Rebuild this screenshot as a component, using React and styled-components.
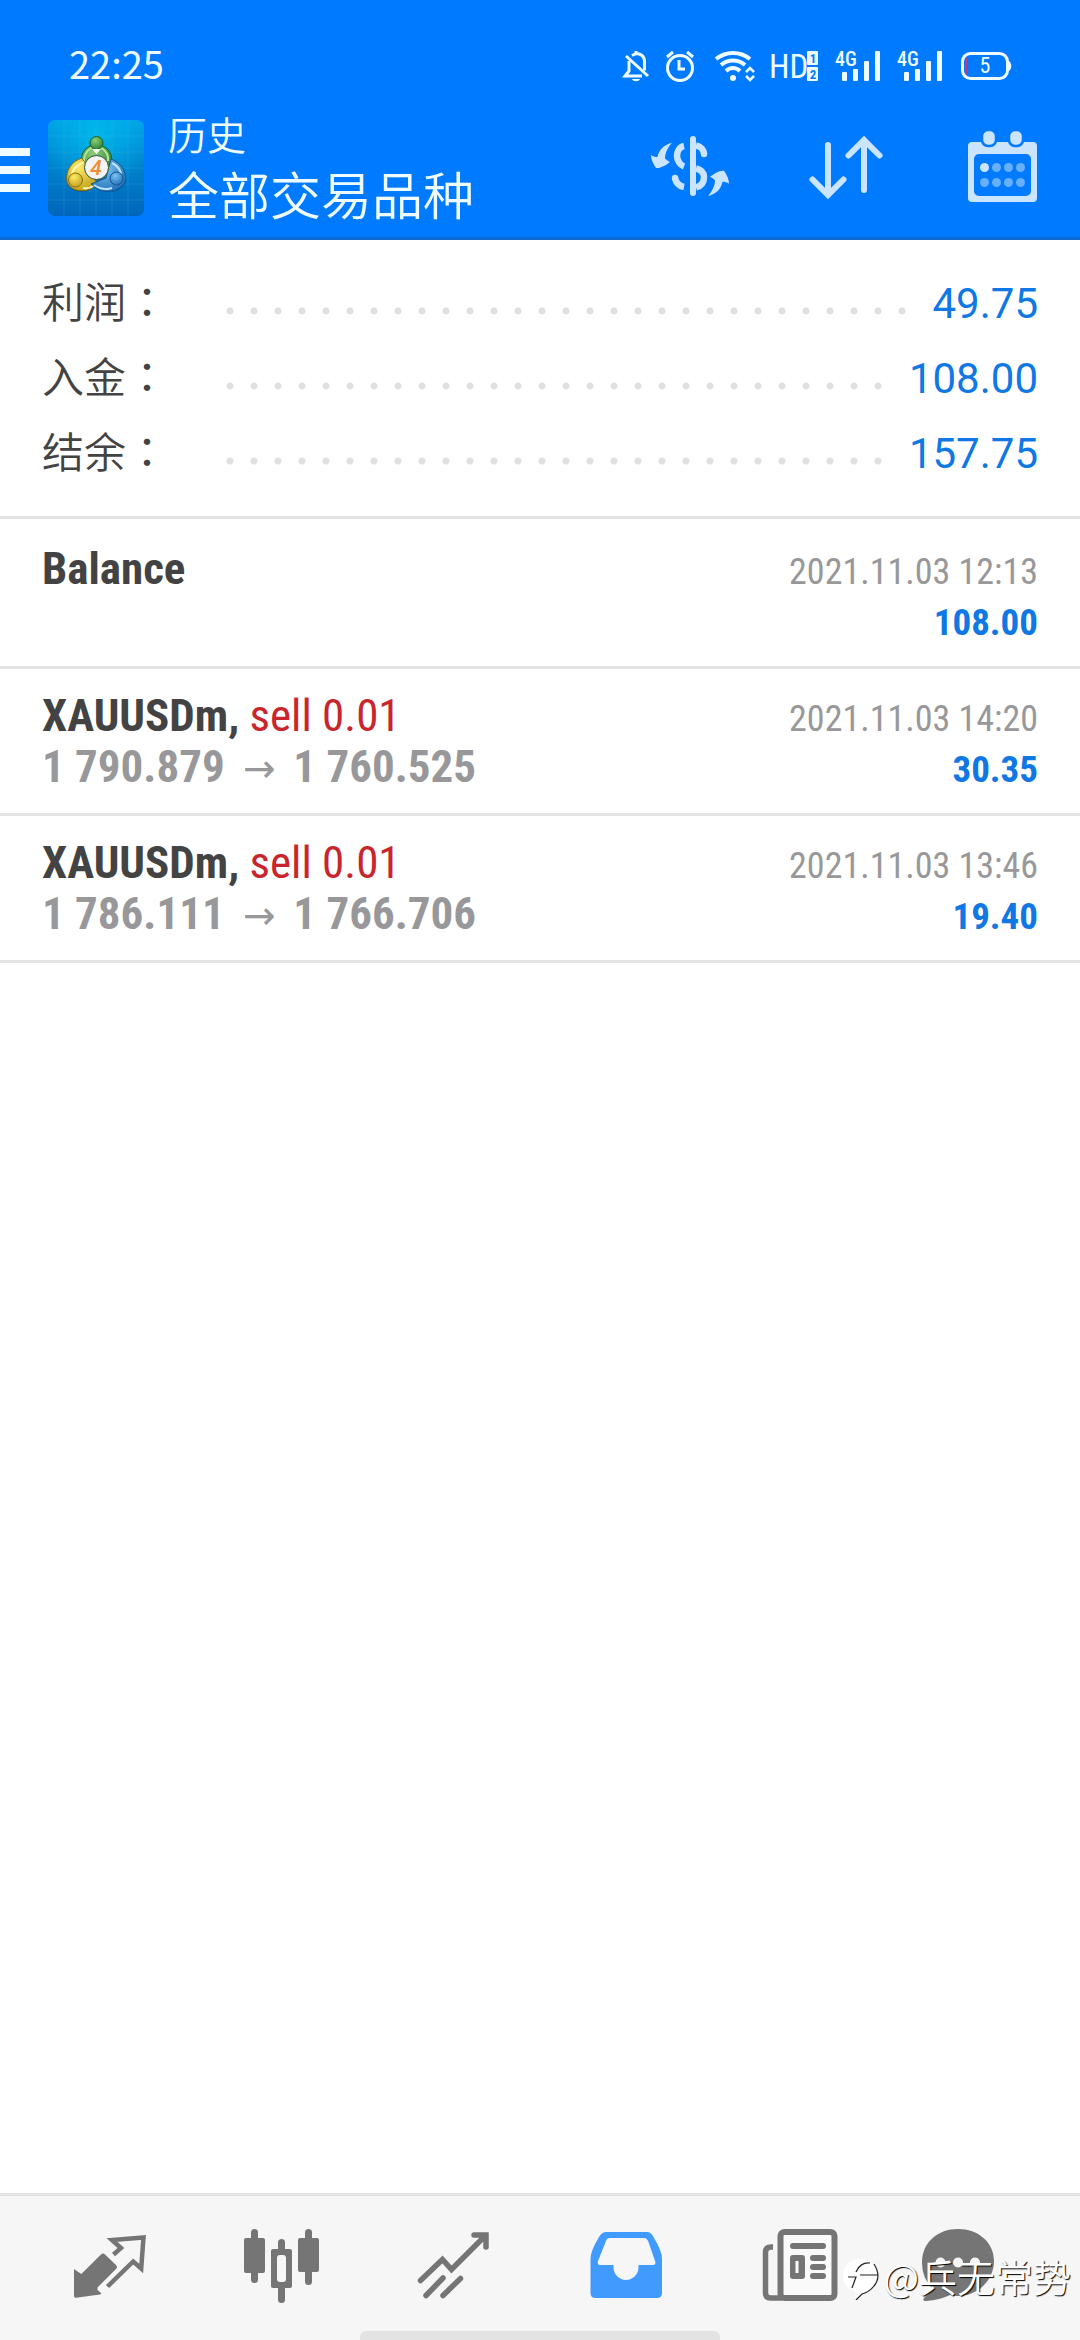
import React from 'react';
import styled, {createGlobalStyle, ThemeProvider} from 'styled-components';

const theme = {
  color: {
    primary: '#007aff',
    primaryDark: '#0a6bd2',
    active: '#419bff',
    icon: '#cce5ff',
    navIcon: '#757575',
    line: '#e3e3e3',
    text: '#434343',
    muted: '#98989a',
    value: '#0f78e4',
    sell: '#c8262c',
  },
  font: {
    cjk: '"Noto Sans CJK SC", sans-serif',
    regular: 'Roboto, "Noto Sans CJK SC", sans-serif',
    condensed: '"Roboto Condensed", "Liberation Sans Narrow", Roboto, sans-serif',
  },
};

const GlobalStyle = createGlobalStyle`
  *, *::before, *::after {
    box-sizing: border-box;
  }

  body {
    margin: 0;
    background: #fff;
  }

  h1, h2, p, ul, dl, dd {
    margin: 0;
    padding: 0;
  }
`;

const Screen = styled.div`
  position: relative;
  display: flex;
  flex-direction: column;
  min-height: 100vh;
  font-family: ${({theme}) => theme.font.regular};
  color: ${({theme}) => theme.color.text};
`;

const Header = styled.header`
  background: ${({theme}) => theme.color.primary};
  border-bottom: 3px solid ${({theme}) => theme.color.primaryDark};
  color: #effcff;
`;

const StatusBar = styled.div`
  display: flex;
  justify-content: space-between;
  align-items: flex-start;
  padding: 48px 69px 0;
`;

const Time = styled.time`
  font: 400 38px/30px ${({theme}) => theme.font.cjk};
`;

const StatusIcons = styled.div`
  display: flex;
  gap: 16px;

  svg {
    display: block;
    height: 36px;
    overflow: visible;
  }

  text {
    font-family: ${({theme}) => theme.font.condensed};
  }
`;

const TitleBar = styled.div`
  display: flex;
  align-items: center;
  padding: 24px 30px 9px 0;
`;

const IconButton = styled.button`
  flex: none;
  padding: 0;
  border: 0;
  background: none;
  color: ${({theme}) => theme.color.icon};

  svg {
    display: block;
  }
`;

const MenuButton = styled(IconButton)`
  margin-right: 18px;
  color: #effcff;
`;

const Titles = styled.div`
  flex: 1;
  margin-left: 24px;
  font-family: ${({theme}) => theme.font.cjk};
`;

const Title = styled.h1`
  font-size: 39px;
  font-weight: 350;
  line-height: 51px;
`;

const Subtitle = styled.p`
  font-size: 51px;
  font-weight: 350;
  line-height: 69px;
`;

const Actions = styled.div`
  display: flex;
  gap: 60px;
`;

const Main = styled.main`
  flex: 1;
`;

const Summary = styled.dl`
  padding: 26px 42px 25px;
  border-bottom: 3px solid ${({theme}) => theme.color.line};
`;

const SummaryRow = styled.div`
  display: flex;
  align-items: baseline;
`;

const Label = styled.dt`
  flex: 0 0 176px;
  font: 350 42px/60px ${({theme}) => theme.font.cjk};
`;

const Colon = styled.span`
  font-family: "Noto Sans CJK TC", sans-serif;
  font-weight: 400;
`;

const Leader = styled.span`
  flex: 1;
  height: 14px;
  margin-right: 14px;
  background: radial-gradient(circle, #e0e0e0 3px, transparent 4px) 0 0 / 24px 14px repeat-x;
`;

const Value = styled.dd`
  font-size: 42px;
  line-height: 75px;
  color: ${({theme}) => theme.color.value};
`;

const Deals = styled.ul`
  padding-top: 3px;
  list-style: none;
  font-family: ${({theme}) => theme.font.condensed};
`;

const Deal = styled.li`
  padding: 21px 42px;
  border-bottom: 3px solid ${({theme}) => theme.color.line};
`;

const Line = styled.div`
  display: flex;
  justify-content: space-between;
  align-items: baseline;
`;

const Name = styled.h2`
  font-size: 45px;
  font-weight: 700;
  line-height: 51px;
`;

const Side = styled.span`
  font-weight: 400;
  color: ${({theme}) => theme.color.sell};
`;

const Prices = styled.p`
  display: flex;
  align-items: baseline;
  gap: 18px;
  font-size: 45px;
  font-weight: 700;
  line-height: 51px;
  color: ${({theme}) => theme.color.muted};

  /* keeps the line and its baseline when there are no prices */
  &:empty::before {
    content: '\\200b';
  }
`;

const Arrow = styled.span`
  font: 400 39px/30px "DejaVu Sans", sans-serif;
`;

const DateTime = styled.time`
  font-size: 36px;
  line-height: 39px;
  color: ${({theme}) => theme.color.muted};
`;

const Amount = styled.strong`
  font-size: 37px;
  line-height: 39px;
  color: ${({theme}) => theme.color.value};
`;

const Nav = styled.nav`
  position: relative;
  display: grid;
  grid-template-columns: repeat(6, 1fr);
  padding: 24px;
  border-top: 3px solid ${({theme}) => theme.color.line};
  background: #f6f6f6;
`;

const NavLink = styled.a`
  display: flex;
  justify-content: center;
  color: ${({theme, $active}) => ($active ? theme.color.active : theme.color.navIcon)};
`;

const HomeIndicator = styled.span`
  position: absolute;
  bottom: 0;
  left: 50%;
  width: calc(100% / 3);
  height: 9px;
  margin-left: calc(-100% / 6);
  border-radius: 6px 6px 0 0;
  background: #e3e3e3;
`;

const Watermark = styled.div`
  position: absolute;
  right: 9px;
  bottom: 40px;
  display: flex;
  align-items: flex-end;
  gap: 4px;
  font: 350 38px/48px ${({theme}) => theme.font.cjk};
  color: #fff;
  text-shadow: 1px 1px 1px #000;
  pointer-events: none;
`;

const BellOffIcon = () => (
  <svg width="26" viewBox="0 0 26 36" fill="none" stroke="currentColor" strokeWidth="3">
    <path d="M6 13v10l-4 5h17M9 7.500c7-4 13 0 12.500 7v8"/>
    <path d="M3 8l22 20M13 3v3"/>
    <path d="M9 31h8c-1 3-7 3-8 0z" fill="currentColor" stroke="none"/>
  </svg>
);

const AlarmIcon = () => (
  <svg width="32" viewBox="0 0 32 36" fill="none" stroke="currentColor" strokeWidth="3">
    <circle cx="15" cy="20" r="12.500"/>
    <path d="M14 12v9h6M2 9l6-5M28 9l-6-5"/>
  </svg>
);

const WifiIcon = () => (
  <svg width="42" viewBox="0 0 42 36" fill="none" stroke="currentColor" strokeWidth="4">
    <path d="M3 11c10-8 24-8 34 0M8 17c7-6 17-6 24 0M13 23c4-4 10-4 14 0"/>
    <circle cx="20" cy="30" r="3" fill="currentColor" stroke="none"/>
    <path d="M33 24l4-4 4 4M33 28l4 4 4-4" strokeWidth="2.500"/>
  </svg>
);

const HdIcon = () => (
  <svg width="48" viewBox="0 0 48 36" fill="currentColor">
    <text x="-2" y="30" fontSize="33">HD</text>
    <rect x="36" y="3" width="11" height="14" rx="1"/>
    <rect x="36" y="19" width="11" height="14" rx="1"/>
    <text x="42" y="15" fontSize="13" fontWeight="700" textAnchor="middle" fill="#007aff">1</text>
    <text x="42" y="31" fontSize="13" fontWeight="700" textAnchor="middle" fill="#007aff">2</text>
  </svg>
);

const SignalIcon = () => (
  <svg width="46" viewBox="0 0 46 36" fill="currentColor">
    <text x="0" y="18" fontSize="20" fontWeight="500">4G</text>
    <rect x="7" y="24" width="5" height="9" rx="1"/>
    <rect x="18" y="21" width="5" height="12" rx="1"/>
    <rect x="29" y="13" width="5" height="20" rx="1"/>
    <rect x="40" y="3" width="5" height="30" rx="1"/>
  </svg>
);

const BatteryIcon = () => (
  <svg width="52" viewBox="0 0 52 36" fill="none">
    <rect x="3.500" y="5.500" width="45" height="25" rx="8" stroke="currentColor" strokeWidth="3"/>
    <path d="M50 13c3 2 3 8 0 10z" fill="currentColor"/>
    <path d="M8 9v18c-3-3-3-15 0-18z" fill="#c0397a"/>
    <text x="26" y="25" fontSize="22" textAnchor="middle" fill="currentColor">5</text>
  </svg>
);

const MenuIcon = () => (
  <svg width="30" height="48" viewBox="0 0 30 48" fill="currentColor">
    <path d="M0 4h30v8H0zM0 22h30v8H0zM0 40h30v8H0z"/>
  </svg>
);

const Logo = () => (
  <svg width="96" height="96" viewBox="0 0 96 96" role="img" aria-label="MetaTrader 4">
    <defs>
      <linearGradient id="tile" x1="0" y1="0" x2="0" y2="1">
        <stop offset="0" stopColor="#009fe6"/>
        <stop offset="0.500" stopColor="#0080cb"/>
        <stop offset="1" stopColor="#0066bb"/>
      </linearGradient>
      <radialGradient id="shine" cx="0.500" cy="0.150" r="0.600">
        <stop offset="0" stopColor="#00c4ee" stopOpacity="0.700"/>
        <stop offset="1" stopColor="#00c4ee" stopOpacity="0"/>
      </radialGradient>
      <radialGradient id="green" cx="0.400" cy="0.300" r="0.800">
        <stop offset="0" stopColor="#8fce78"/>
        <stop offset="1" stopColor="#1f7d2c"/>
      </radialGradient>
      <radialGradient id="yellow" cx="0.400" cy="0.300" r="0.800">
        <stop offset="0" stopColor="#fdea6a"/>
        <stop offset="1" stopColor="#bd9a12"/>
      </radialGradient>
      <radialGradient id="blue" cx="0.400" cy="0.300" r="0.800">
        <stop offset="0" stopColor="#7cc4f0"/>
        <stop offset="1" stopColor="#1769b5"/>
      </radialGradient>
    </defs>
    <rect width="96" height="96" rx="7" fill="url(#tile)"/>
    <rect width="96" height="96" rx="7" fill="url(#shine)"/>
    <path
      d="M16 0v96M32 0v96M48 0v96M64 0v96M80 0v96M0 16h96M0 32h96M0 48h96M0 64h96M0 80h96"
      stroke="#5cc4f0"
      strokeOpacity="0.180"
    />
    <path d="M19 64c4 8 12 9 20 7l9-5 10 6c9 1 17-3 20-10l-2-8z" fill="#00497f" fillOpacity="0.400"/>
    <circle cx="48.500" cy="40" r="15.500" fill="url(#green)" stroke="#17602a"/>
    <path d="M36 44c-1-10 5-17 12-17s13 6 12 14" fill="none" stroke="#b6e29b" strokeWidth="2"/>
    <path d="M34 38c-10 3-17 12-15 24 3 8 13 11 24 7l6-6z" fill="url(#yellow)" stroke="#7d6a10"/>
    <path d="M36 42c-9 4-13 9-12 16M35 68c4 1 8 0 12-3" fill="none" stroke="#fff7b0" strokeWidth="2"/>
    <path d="M63 39c11 4 16 14 14 23-4 8-16 12-26 8l-8-6 15-6z" fill="url(#blue)" stroke="#17568e"/>
    <path d="M64 43c6 3 9 8 9 13M46 65c6 4 12 5 18 3" fill="none" stroke="#b9e4fb" strokeWidth="2"/>
    <circle cx="48.500" cy="23" r="6.500" fill="url(#green)" stroke="#17602a"/>
    <circle cx="27.500" cy="60" r="7" fill="url(#yellow)" stroke="#8a7412"/>
    <circle cx="68.500" cy="58.500" r="6.500" fill="url(#blue)" stroke="#17568e"/>
    <path d="M44 29l4.500 5 4.500-5z" fill="#f3f8ee"/>
    <circle cx="48.500" cy="47.500" r="12" fill="#f4f4f2" stroke="#37533a"/>
    <text
      x="48"
      y="55"
      fontFamily="Roboto, sans-serif"
      fontSize="21"
      fontStyle="italic"
      fontWeight="500"
      textAnchor="middle"
      fill="#f08c32"
    >
      4
    </text>
  </svg>
);

const CurrencyIcon = () => {
  const arrow = 'M30 22.700C21 25 17 30 15.500 37 13 37 11 36.500 9 35c0 4 2 9 5 13 5 .5 10-3 14-6-2-1-3.500-2-5-3.500 0-5.500 3-11.500 7-15.800z';

  return (
    <svg width="96" height="96" viewBox="0 0 96 96" fill="currentColor">
      <path d={arrow}/>
      <path d={arrow} transform="rotate(180 48 49.400)"/>
      <rect x="48" y="16" width="6" height="60" rx="3"/>
      <path
        d="M42 26c-5 1-7 6-7 10s3 9 7 10.500M54 25.500c5 1 8 4.500 8 8.500M54 48.500c6 1.500 8 4.500 8 8.500 0 5-3 9-8 10.500M33 58c1 5 4 8 9 9"
        fill="none"
        stroke="currentColor"
        strokeWidth="6.500"
      />
      <circle cx="62" cy="34" r="3.200"/>
      <circle cx="33" cy="58" r="3.200"/>
    </svg>
  );
};

const SortIcon = () => (
  <svg
    width="96"
    height="96"
    viewBox="0 0 96 96"
    fill="none"
    stroke="currentColor"
    strokeWidth="6"
    strokeLinecap="round"
  >
    <path d="M30 25v50M14.500 59.500l15.500 15.500 15.500-15.500M66 70V20M50.500 35.500L66 20l15.500 15.500"/>
  </svg>
);

const CalendarIcon = () => (
  <svg width="96" height="96" viewBox="0 0 96 96" fill="currentColor">
    <path
      fillRule="evenodd"
      d="M18 22h61a4 4 0 0 1 4 4v52a4 4 0 0 1-4 4H18a4 4 0 0 1-4-4V26a4 4 0 0 1 4-4zM25 34a5 5 0 0 0-5 5v32a5 5 0 0 0 5 5h47a5 5 0 0 0 5-5V39a5 5 0 0 0-5-5z"
    />
    <rect x="28" y="10" width="14" height="16" rx="6" stroke="#007aff" strokeWidth="2.500"/>
    <rect x="55" y="10" width="14" height="16" rx="6" stroke="#007aff" strokeWidth="2.500"/>
    {[47.5, 62.5].map((y) => [30.5, 42.5, 54.5, 66.5].map((x) => (
      <circle key={`${x}-${y}`} cx={x} cy={y} r="4.500" fillOpacity={x < 40 && y < 50 ? 1 : 0.5}/>
    )))}
  </svg>
);

const NavSvg = ({children, ...props}) => (
  <svg width="96" height="96" viewBox="0 0 96 96" fill="currentColor" {...props}>{children}</svg>
);

const QuotesIcon = () => (
  <NavSvg>
    <path d="M12 49l7.300 5L39 34.500q2-2 4 0L54 45q2 2 0 4L35.500 67.500v2.500l4 3.500-1.500 1-24 3.200q-2 .3-2-1.700z"/>
    <path
      d="M51.500 34.500l7.500-6.500-9-8 31.500-2.500-2.300 31-8-7L45.500 66.500"
      fill="none"
      stroke="currentColor"
      strokeWidth="4.500"
    />
  </NavSvg>
);

const ChartsIcon = () => (
  <NavSvg>
    <rect x="17" y="9" width="7" height="54" rx="3.500"/>
    <rect x="10" y="18" width="21" height="35" rx="2"/>
    <rect x="44" y="19" width="7" height="64" rx="3.500"/>
    <rect x="37" y="29" width="21" height="39" rx="2"/>
    <rect x="43" y="35" width="9" height="27" rx="3" fill="#f6f6f6"/>
    <rect x="71" y="9" width="7" height="56" rx="3.500"/>
    <rect x="64" y="18" width="21" height="34" rx="2"/>
  </NavSvg>
);

const TradeIcon = () => (
  <NavSvg fill="none" stroke="currentColor" strokeWidth="5.500" strokeLinecap="round">
    <path d="M14.500 60.500l22-21 9 10L79 16M68 15h12v12M20 75.500l17-17.500M37 75.500l17.500-17"/>
  </NavSvg>
);

const HistoryIcon = () => (
  <NavSvg>
    <path
      fillRule="evenodd"
      d="M28 12h41q4 0 6.500 5 8.500 14 8.500 22v34q0 5-5 5H17.500q-5 0-5-5V39q0-8 8.500-22 3-5 7-5zM32 18q-3 0-4 3l-8 20q-1 4 2 4h13.500v2.500a12.500 12.500 0 0 0 25 0V45H75q3.500 0 2-4l-6.500-19q-1.500-4-4.500-4z"
    />
  </NavSvg>
);

const NewsIcon = () => (
  <NavSvg>
    <rect x="30.500" y="12" width="54" height="66" rx="4" fill="#fafafa" stroke="currentColor" strokeWidth="6"/>
    <path d="M23 27h-2q-5.500 0-5.500 5.500V73q0 5 5 5H32" fill="none" stroke="currentColor" strokeWidth="5.500"/>
    <rect x="40" y="23" width="36" height="6" rx="3"/>
    <path fillRule="evenodd" d="M43 35h9q3 0 3 3v18q0 3-3 3h-9q-3 0-3-3V38q0-3 3-3zM45.500 41v12h3V41z"/>
    <rect x="60" y="35" width="16" height="6" rx="3"/>
    <rect x="60" y="44" width="16" height="6" rx="3"/>
    <rect x="60" y="53" width="16" height="6" rx="3"/>
  </NavSvg>
);

const ChatIcon = () => (
  <NavSvg>
    <path d="M36 9c20 0 36 13 36 32S56 76 36 76q-4 0-8-1-10 5-24 6-4 0-2-3 7-5 8-10Q0 58 0 43C0 22 16 9 36 9z"/>
    <g fill="#f6f6f6">
      <circle cx="18.500" cy="42.500" r="5"/>
      <circle cx="36" cy="42.500" r="5"/>
      <circle cx="53" cy="42.500" r="5"/>
    </g>
  </NavSvg>
);

const WatermarkIcon = () => (
  <svg width="36" height="42" viewBox="0 0 36 42" fill="none">
    <path d="M17 1c10 0 18 8 18 17 0 10-7 15-14 18l-9 5 1-7C5 32 0 26 0 18 0 8 7 1 17 1z" fill="#fff"/>
    <path
      d="M31 6c5 8 5 16 0 22-3 4-8 7-12 8l-6 6M27 5c-6-1-12 3-14 9M5 19h8l-4 11M17 17h18"
      stroke="#222"
      strokeWidth="1.200"
    />
  </svg>
);

const summary = [
  {label: '利润', value: '49.75'},
  {label: '入金', value: '108.00'},
  {label: '结余', value: '157.75'},
];

const deals = [
  {id: 1, name: 'Balance', date: '2021.11.03 12:13', amount: '108.00'},
  {
    id: 2,
    name: 'XAUUSDm,',
    side: 'sell 0.01',
    open: '1 790.879',
    close: '1 760.525',
    date: '2021.11.03 14:20',
    amount: '30.35',
  },
  {
    id: 3,
    name: 'XAUUSDm,',
    side: 'sell 0.01',
    open: '1 786.111',
    close: '1 766.706',
    date: '2021.11.03 13:46',
    amount: '19.40',
  },
];

const tabs = [
  {name: 'quotes', label: '行情', Icon: QuotesIcon},
  {name: 'charts', label: '图表', Icon: ChartsIcon},
  {name: 'trade', label: '交易', Icon: TradeIcon},
  {name: 'history', label: '历史', Icon: HistoryIcon},
  {name: 'news', label: '新闻', Icon: NewsIcon},
  {name: 'chat', label: '聊天', Icon: ChatIcon},
];

const AppHeader = () => (
  <Header>
    <StatusBar>
      <Time>22:25</Time>
      <StatusIcons>
        <BellOffIcon/>
        <AlarmIcon/>
        <WifiIcon/>
        <HdIcon/>
        <SignalIcon/>
        <SignalIcon/>
        <BatteryIcon/>
      </StatusIcons>
    </StatusBar>
    <TitleBar>
      <MenuButton type="button" aria-label="菜单"><MenuIcon/></MenuButton>
      <Logo/>
      <Titles>
        <Title>历史</Title>
        <Subtitle>全部交易品种</Subtitle>
      </Titles>
      <Actions>
        <IconButton type="button" aria-label="交易品种"><CurrencyIcon/></IconButton>
        <IconButton type="button" aria-label="排序"><SortIcon/></IconButton>
        <IconButton type="button" aria-label="日期"><CalendarIcon/></IconButton>
      </Actions>
    </TitleBar>
  </Header>
);

const DealItem = ({name, side, open, close, date, amount}) => (
  <Deal>
    <Line>
      <Name>{name}{side && <Side> {side}</Side>}</Name>
      <DateTime>{date}</DateTime>
    </Line>
    <Line>
      <Prices>
        {open && (
          <>
            <span>{open}</span>
            <Arrow>→</Arrow>
            <span>{close}</span>
          </>
        )}
      </Prices>
      <Amount>{amount}</Amount>
    </Line>
  </Deal>
);

const App = () => (
  <ThemeProvider theme={theme}>
    <GlobalStyle/>
    <Screen lang="zh-CN">
      <AppHeader/>
      <Main>
        <Summary>
          {summary.map(({label, value}) => (
            <SummaryRow key={label}>
              <Label>{label}<Colon lang="zh-TW">：</Colon></Label>
              <Leader/>
              <Value>{value}</Value>
            </SummaryRow>
          ))}
        </Summary>
        <Deals>
          {deals.map((deal) => <DealItem key={deal.id} {...deal}/>)}
        </Deals>
      </Main>
      <Nav>
        {tabs.map(({name, label, Icon}) => (
          <NavLink key={name} href={`#${name}`} aria-label={label} $active={name === 'history'}>
            <Icon/>
          </NavLink>
        ))}
        <HomeIndicator/>
      </Nav>
      <Watermark>
        <WatermarkIcon/>
        @兵无常势
      </Watermark>
    </Screen>
  </ThemeProvider>
);

export default App;
